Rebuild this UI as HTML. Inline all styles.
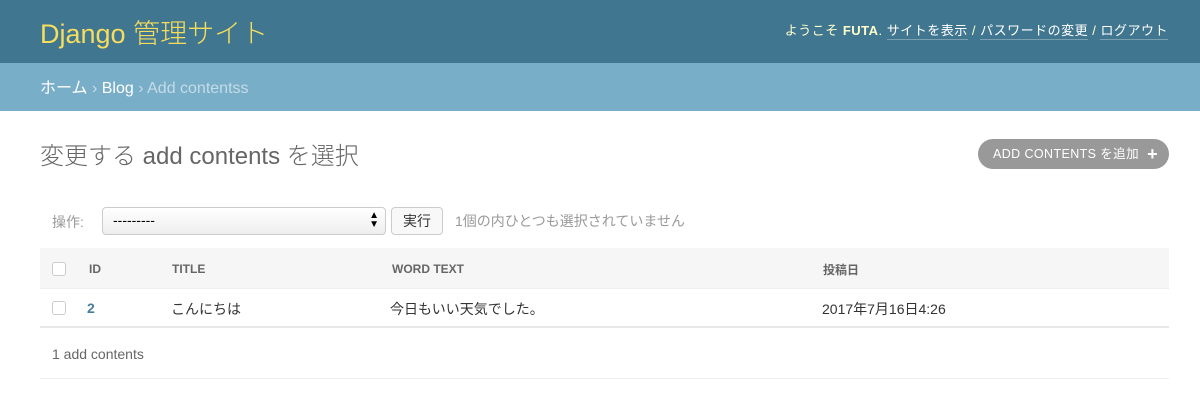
<!DOCTYPE html>
<html><head><meta charset="utf-8"><style>
body{margin:0;width:1200px;height:417px;background:#fff;font-family:"Liberation Sans","Noto Sans CJK JP",sans-serif;color:#333;overflow:hidden;position:relative}
.hdr{position:absolute;left:0;top:0;width:1200px;height:63px;background:#417690}
.brand{position:absolute;left:40px;top:12px;font-size:27px;color:#f5dd5d;font-weight:300}
.tools{position:absolute;right:32px;top:20px;font-size:13px;color:#ffc;letter-spacing:0.5px}
.tools a{color:#fff;border-bottom:1px solid rgba(255,255,255,.3);text-decoration:none;padding-bottom:1px}
.bc{position:absolute;left:0;top:63px;width:1200px;height:48px;background:#79aec8;font-size:16px;color:#c4dce8}
.bc span{position:absolute;left:40px;top:11px}
.bc b{color:#fff;font-weight:normal}
h1{position:absolute;left:40px;top:136px;margin:0;font-size:24px;font-weight:300;color:#666}
.add{position:absolute;left:978px;top:139px;width:191px;height:30px;border-radius:15px;background:#999;color:#fff;font-size:12.5px;line-height:30px;text-indent:15px;letter-spacing:.4px}
.add i{position:absolute;right:11px;top:0;font-style:normal;font-weight:bold;font-size:18px;text-indent:0}
.act{position:absolute;top:208px;font-size:14px;color:#999}
.sel{position:absolute;left:102px;top:207px;width:282px;height:26px;border:1px solid #ccc;border-radius:4px;background:linear-gradient(#fff,#eee);font-size:14px;color:#000}
.btn{position:absolute;left:391px;top:207px;width:50px;height:26px;border:1px solid #ccc;border-radius:4px;background:#f8f8f8;font-size:14px;text-align:center;line-height:26px;color:#333}
.th{position:absolute;left:40px;top:248px;width:1129px;height:40px;background:#f6f6f6;border-bottom:1px solid #eee}
.cell{position:absolute;font-size:12px;font-weight:bold;color:#666}
.cb{position:absolute;width:12px;height:12px;border:1px solid #ccc;border-radius:3px;background:#fff}
.rowt{position:absolute;font-size:14px;color:#333}
.l1{position:absolute;left:40px;top:326px;width:1129px;height:2px;background:#e8e8e8}
.l2{position:absolute;left:40px;top:378px;width:1129px;height:1px;background:#eee}
</style></head><body>
<div class="hdr"><div class="brand">Django 管理サイト</div>
<div class="tools">ようこそ <b>FUTA</b>. <a>サイトを表示</a> / <a>パスワードの変更</a> / <a>ログアウト</a></div></div>
<div class="bc"><span><b>ホーム</b> › <b>Blog</b> › Add contentss</span></div>
<h1>変更する add contents を選択</h1>
<div class="add">ADD CONTENTS を追加<i>+</i></div>
<div class="act" style="left:52px;top:212px">操作:</div>
<div class="sel"><span style="position:absolute;left:10px;top:4px">---------</span><span style="position:absolute;right:6px;top:3px;font-size:10px;line-height:9px">▲<br>▼</span></div>
<div class="btn">実行</div>
<div class="act" style="left:455px;top:211px">1個の内ひとつも選択されていません</div>
<div class="th"></div>
<div class="cb" style="left:52px;top:262px"></div>
<div class="cell" style="left:89px;top:262px">ID</div>
<div class="cell" style="left:172px;top:262px">TITLE</div>
<div class="cell" style="left:392px;top:262px">WORD TEXT</div>
<div class="cell" style="left:823px;top:261px">投稿日</div>
<div class="cb" style="left:52px;top:301px"></div>
<div class="rowt" style="left:87px;top:300px;color:#447e9b;font-weight:bold">2</div>
<div class="rowt" style="left:171px;top:299px">こんにちは</div>
<div class="rowt" style="left:390px;top:299px">今日もいい天気でした。</div>
<div class="rowt" style="left:822px;top:299px">2017年7月16日4:26</div>
<div class="l1"></div>
<div class="rowt" style="left:52px;top:346px;color:#666">1 add contents</div>
<div class="l2"></div>
</body></html>
